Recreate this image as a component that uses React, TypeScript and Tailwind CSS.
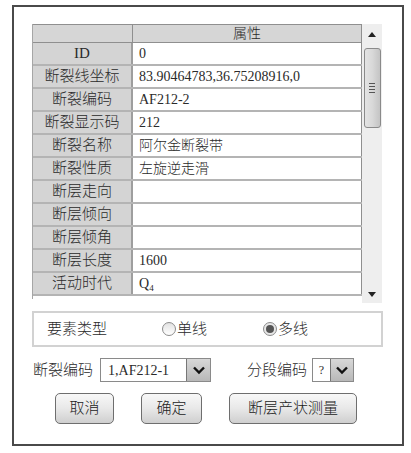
import React from "react";

const rows: [string, React.ReactNode][] = [
  ["ID", "0"],
  ["断裂线坐标", "83.90464783,36.75208916,0"],
  ["断裂编码", "AF212-2"],
  ["断裂显示码", "212"],
  ["断裂名称", "阿尔金断裂带"],
  ["断裂性质", "左旋逆走滑"],
  ["断层走向", ""],
  ["断层倾向", ""],
  ["断层倾角", ""],
  ["断层长度", "1600"],
  [
    "活动时代",
    <span>
      Q<sub className="text-[9px] relative top-[3px]">4</sub>
    </span>,
  ],
];

function Chevron() {
  return (
    <svg width="14" height="10" viewBox="0 0 14 10">
      <path d="M2 2.5 L7 7.5 L12 2.5" fill="none" stroke="#111" strokeWidth="2.4" />
    </svg>
  );
}

function Btn({ w, children }: { w: string; children: React.ReactNode }) {
  return (
    <div
      className={`${w} h-[31px] rounded-[5px] border-[1.5px] border-[#6e6e6e] bg-gradient-to-b from-[#f8f8f8] via-[#e8e8e8] to-[#cfcfcf] flex items-center justify-center text-[15px] text-[#222]`}
    >
      {children}
    </div>
  );
}

export default function App() {
  return (
    <div
      className="w-[411px] h-[453px] bg-white overflow-hidden font-light"
      style={{ fontFamily: "'Liberation Serif', 'Noto Sans CJK SC', serif" }}
    >
      <div className="ml-[12px] mt-[5px] w-[392px] h-[441px] border-2 border-[#4a4a4a] text-[#2a2a2a]">
        {/* table + scrollbar */}
        <div className="ml-[18px] mt-[17px] flex">
          <div className="w-[330px] h-[275px] overflow-hidden border-l border-[#a6a6a6]">
            <div className="flex h-[19px] bg-[#d6d6d6] border-t border-b border-[#8f8f8f]">
              <div className="w-[100px] border-r border-[#8f8f8f]" />
              <div className="flex-1 flex items-center justify-center text-[14px] border-r border-[#8f8f8f]">
                属性
              </div>
            </div>
            {rows.map(([k, v], i) => (
              <div key={i} className="flex h-[23px] border-b-2 border-[#b4b4b4]">
                <div className="w-[100px] bg-[#d4d4d4] border-r-2 border-[#9e9e9e] flex items-center justify-center text-[15px]">
                  {k}
                </div>
                <div className="flex-1 bg-white border-r border-[#8f8f8f] flex items-center pl-[6px] text-[14px]">
                  {v}
                </div>
              </div>
            ))}
          </div>
          <div className="w-[20px] h-[279px] bg-[#eeeeee] flex flex-col items-center">
            <div className="h-[21px] flex items-center justify-center">
              <svg width="8" height="5" viewBox="0 0 8 5">
                <path d="M0 5 L4 0 L8 5 Z" fill="#222" />
              </svg>
            </div>
            <div className="mt-[3px] w-[17px] h-[80px] rounded-[3px] border border-[#8a8a8a] bg-gradient-to-r from-[#e4e4e4] via-[#d8d8d8] to-[#c4c4c4] flex flex-col items-center justify-center gap-[2px]">
              <div className="w-[6px] h-[1px] bg-[#555]" />
              <div className="w-[6px] h-[1px] bg-[#555]" />
              <div className="w-[6px] h-[1px] bg-[#555]" />
              <div className="w-[6px] h-[1px] bg-[#555]" />
            </div>
            <div className="flex-1" />
            <div className="h-[17px] flex items-center justify-center">
              <svg width="8" height="5" viewBox="0 0 8 5">
                <path d="M0 0 L8 0 L4 5 Z" fill="#222" />
              </svg>
            </div>
          </div>
        </div>

        {/* group box */}
        <div className="ml-[18px] mt-[8px] w-[351px] h-[36px] border-2 border-[#d2d2d2] flex items-center text-[15px]">
          <span className="ml-[13px]">要素类型</span>
          <div className="ml-[55px] flex items-center">
            <div className="w-[14px] h-[14px] rounded-full border border-[#8c8c8c] bg-gradient-to-b from-[#e2e2e2] to-[#ffffff]" />
            <span className="ml-[1px]">单线</span>
          </div>
          <div className="ml-[56px] flex items-center">
            <div className="w-[14px] h-[14px] rounded-full border border-[#8c8c8c] bg-[#e8e8e8] flex items-center justify-center">
              <div className="w-[8px] h-[8px] rounded-full bg-[#555]" />
            </div>
            <span className="ml-[1px]">多线</span>
          </div>
        </div>

        {/* combos */}
        <div className="mt-[11px] flex items-center h-[24px] text-[15px]">
          <span className="ml-[19px]">断裂编码</span>
          <div className="ml-[7px] w-[111px] h-[24px] border border-[#8a8a8a] flex bg-white">
            <div className="flex-1 flex items-center pl-[7px] text-[14px]">1,AF212-1</div>
            <div className="w-[24px] bg-gradient-to-b from-[#d8d8d8] to-[#b8b8b8] border-l border-[#777] flex items-center justify-center">
              <Chevron />
            </div>
          </div>
          <span className="ml-[36px]">分段编码</span>
          <div className="ml-[5px] w-[42px] h-[24px] border border-[#8a8a8a] flex bg-white">
            <div className="w-[17px] flex items-start justify-center pt-[2px] text-[12px]">?</div>
            <div className="flex-1 bg-gradient-to-b from-[#d8d8d8] to-[#b8b8b8] border-l border-[#777] flex items-center justify-center">
              <Chevron />
            </div>
          </div>
        </div>

        {/* buttons */}
        <div className="mt-[11px] flex">
          <div className="ml-[41px]">
            <Btn w="w-[59px]">取消</Btn>
          </div>
          <div className="ml-[27px]">
            <Btn w="w-[61px]">确定</Btn>
          </div>
          <div className="ml-[27px]">
            <Btn w="w-[128px]">断层产状测量</Btn>
          </div>
        </div>
      </div>
    </div>
  );
}
